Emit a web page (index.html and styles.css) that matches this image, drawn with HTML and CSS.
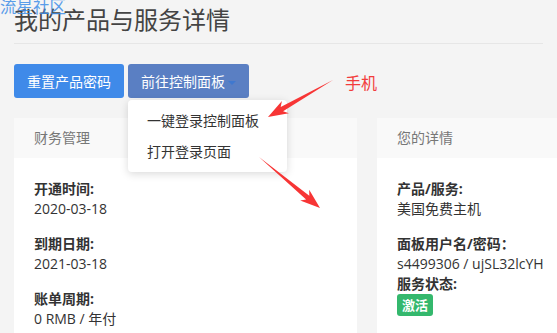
FILE: index.html
```html
<!DOCTYPE html>
<html lang="zh-CN">
<head>
	<meta charset="UTF-8">
	<meta name="viewport" content="width=device-width, initial-scale=1.0">
	<title>我的产品与服务详情</title>
	<link rel="stylesheet" href="styles.css">
</head>
<body>
	<div class="watermark">流星社区</div>

	<div class="page">
		<h1 class="page-title">我的产品与服务详情</h1>

		<div class="actions">
			<button class="btn btn-primary">重置产品密码</button>
			<div class="dropdown">
				<button class="btn btn-active">前往控制面板<span class="caret"></span></button>
				<ul class="dropdown-menu">
					<li>一键登录控制面板</li>
					<li>打开登录页面</li>
				</ul>
			</div>
		</div>

		<div class="cards">
			<div class="card">
				<div class="card-header">财务管理</div>
				<div class="card-body">
					<div class="field">
						<strong>开通时间:</strong>
						<span>2020-03-18</span>
					</div>
					<div class="field">
						<strong>到期日期:</strong>
						<span>2021-03-18</span>
					</div>
					<div class="field">
						<strong>账单周期:</strong>
						<span>0 RMB / 年付</span>
					</div>
				</div>
			</div>

			<div class="card">
				<div class="card-header">您的详情</div>
				<div class="card-body">
					<div class="field">
						<strong>产品/服务:</strong>
						<span>美国免费主机</span>
					</div>
					<div class="field field-tight">
						<strong>面板用户名/密码：</strong>
						<span>s4499306 / ujSL32lcYH</span>
					</div>
					<div class="field">
						<strong>服务状态:</strong>
						<span><span class="badge">激活</span></span>
					</div>
				</div>
			</div>
		</div>
	</div>

	<!-- annotation drawn over the screenshot -->
	<div class="note">手机</div>
	<svg class="arrows" width="557" height="333" viewBox="0 0 557 333">
		<polygon points="333,80 280.7,106.9 281.9,101 268,117 288.9,113.2 283.1,111.3" />
		<polygon points="259,157 309.3,195.8 309.2,189.8 320,208 300.2,200.6 306.1,199.6" />
	</svg>
</body>
</html>
```

FILE: styles.css
```css
body {
	margin: 0;
	background-color: #f4f4f4;
	font-family: "Open Sans", "Noto Sans CJK SC", sans-serif;
	font-size: 14px;
	color: #333;
	overflow: hidden;
	position: relative;
	height: 333px;
}

.watermark {
	position: absolute;
	top: -4px;
	left: 0;
	font-size: 16.5px;
	line-height: 22px;
	color: #3f8ee8;
	opacity: 0.85;
	z-index: 5;
}

.page {
	padding: 0 14px;
}

.page-title {
	margin: 0;
	padding: 6px 0 9px;
	font-size: 24px;
	line-height: 28px;
	font-weight: normal;
	color: #444;
	border-bottom: 1px solid #e6e6e6;
}

.actions {
	display: flex;
	gap: 4px;
	margin-top: 20px;
}

.btn {
	height: 34px;
	padding: 0 13px;
	border: none;
	border-radius: 3px;
	font-family: inherit;
	font-size: 14px;
	color: #fff;
	display: flex;
	align-items: center;
}

.btn-primary {
	background-color: #3f8ae9;
}

.btn-active {
	background-color: #5a7fc3;
}

.caret {
	width: 0;
	height: 0;
	margin-left: 3px;
	margin-top: 3px;
	border-left: 4px solid transparent;
	border-right: 4px solid transparent;
	border-top: 4px solid #3f78cf;
}

.dropdown {
	position: relative;
}

.dropdown-menu {
	position: absolute;
	top: 36px;
	left: 0;
	width: 159px;
	margin: 0;
	padding: 6px 0 4px;
	list-style: none;
	background-color: #fff;
	border-radius: 4px;
	box-shadow: 0 2px 8px rgba(0, 0, 0, 0.15);
	z-index: 3;
}

.dropdown-menu li {
	padding: 5px 19px 6px;
	line-height: 20px;
	white-space: nowrap;
}

.cards {
	display: grid;
	grid-template-columns: 343px 343px;
	gap: 20px;
	margin-top: 20px;
}

.card {
	background-color: #fff;
	height: 215px;
}

.card-header {
	height: 40px;
	line-height: 40px;
	padding: 0 20px;
	background-color: #f9f9f9;
	color: #777;
}

.card-body {
	padding: 21px 20px 0;
}

.field {
	display: flex;
	flex-direction: column;
	line-height: 20px;
	margin-bottom: 15px;
}

.field-tight {
	margin-bottom: 0;
}

.field strong {
	color: #333;
}

.badge {
	display: inline-block;
	padding: 0 5px;
	line-height: 22px;
	border-radius: 3px;
	background-color: #34b86d;
	color: #fff;
	font-weight: bold;
	font-size: 13px;
}

.note {
	position: absolute;
	top: 72px;
	left: 345px;
	font-size: 16px;
	line-height: 22px;
	color: #f23c3c;
}

.arrows {
	position: absolute;
	top: 0;
	left: 0;
	fill: #f73535;
	z-index: 4;
}
```
